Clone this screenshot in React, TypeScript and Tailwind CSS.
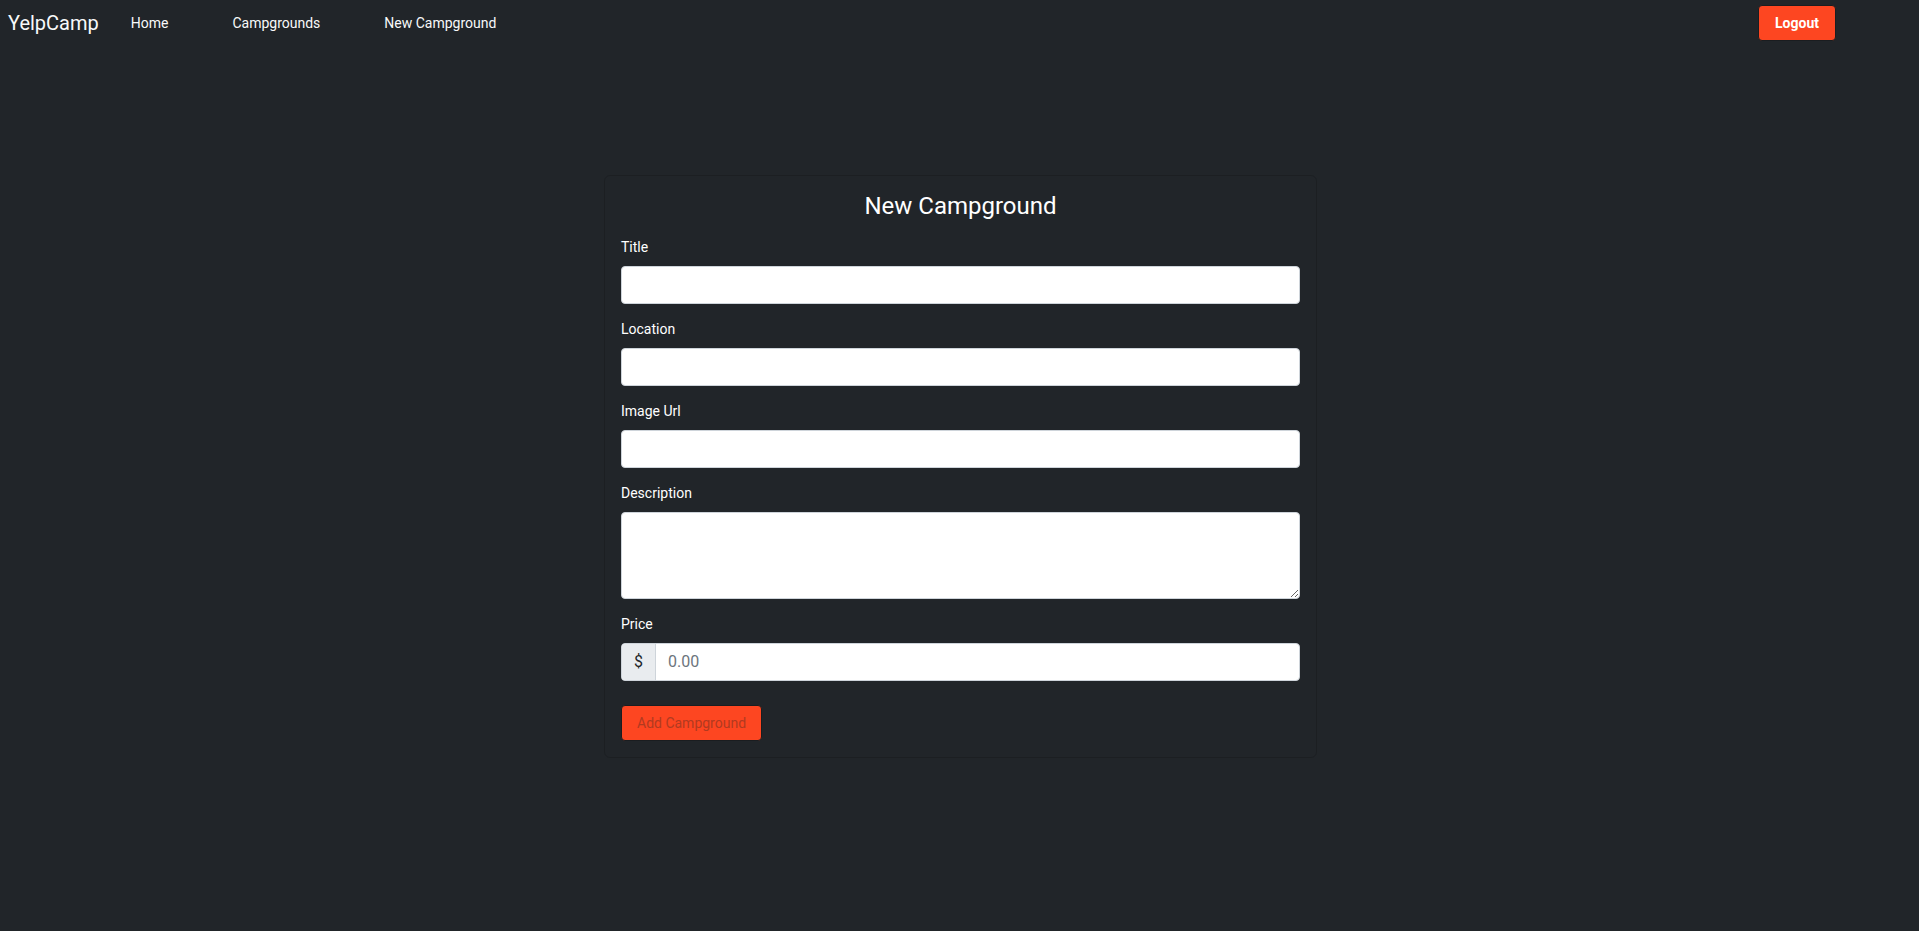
export default function App() {
  const fields = [
    { id: 'title', label: 'Title' },
    { id: 'location', label: 'Location' },
    { id: 'image', label: 'Image Url' },
  ];

  return (
    <div className="min-h-screen bg-[#212529] text-white font-['Roboto','Liberation_Sans',sans-serif]">
      {/* Navbar */}
      <nav className="flex h-[46px] items-center pl-2 pr-[83px]">
        <a href="#" className="text-[20px] leading-[30px] text-[#f8f9fa]">
          YelpCamp
        </a>
        <div className="ml-[32px] flex items-center gap-16 text-[14px] text-[#f8f9fa]">
          <a href="#">Home</a>
          <a href="#">Campgrounds</a>
          <a href="#">New Campground</a>
        </div>
        <button className="ml-auto h-9 rounded-[4px] border border-[#1a1d20] bg-[#fd4621] px-4 text-[14px] font-bold text-white">
          Logout
        </button>
      </nav>

      {/* Form card */}
      <div className="flex justify-center pl-[2px]">
        <div className="mt-[129px] w-[713px] rounded-[6px] border border-black/15 p-4">
          <h4 className="mb-4 text-center text-[24px] leading-[29px]">New Campground</h4>
          <form>
            {fields.map((f) => (
              <div key={f.id} className="mb-[15px]">
                <label htmlFor={f.id} className="mb-2 block text-[14px] leading-[21px]">
                  {f.label}
                </label>
                <input
                  id={f.id}
                  type="text"
                  className="block h-[38px] w-full rounded-[4px] border border-[#ced4da] bg-white px-3 text-[16px] text-[#212529] outline-none"
                />
              </div>
            ))}
            <div className="mb-[15px]">
              <label htmlFor="description" className="mb-2 block text-[14px] leading-[21px]">
                Description
              </label>
              <textarea
                id="description"
                rows={3}
                className="block h-[87px] w-full rounded-[4px] border border-[#ced4da] bg-white px-3 py-1.5 text-[16px] text-[#212529] outline-none"
              />
            </div>
            <div className="mb-6">
              <label htmlFor="price" className="mb-2 block text-[14px] leading-[21px]">
                Price
              </label>
              <div className="flex h-[38px] w-full overflow-hidden rounded-[4px] border border-[#ced4da] bg-white">
                <span className="flex items-center border-r border-[#ced4da] bg-[#e9ecef] px-3 text-[16px] text-[#212529]">
                  $
                </span>
                <input
                  id="price"
                  type="text"
                  placeholder="0.00"
                  className="flex-1 px-3 text-[16px] text-[#212529] outline-none placeholder:text-[#6c757d]"
                />
              </div>
            </div>
            <button
              type="button"
              className="h-[36px] rounded-[4px] border border-[#1a1d20] bg-[#fd4621] px-[15px] text-[14px] text-[#b13a20]"
            >
              Add Campground
            </button>
          </form>
        </div>
      </div>
    </div>
  );
}
